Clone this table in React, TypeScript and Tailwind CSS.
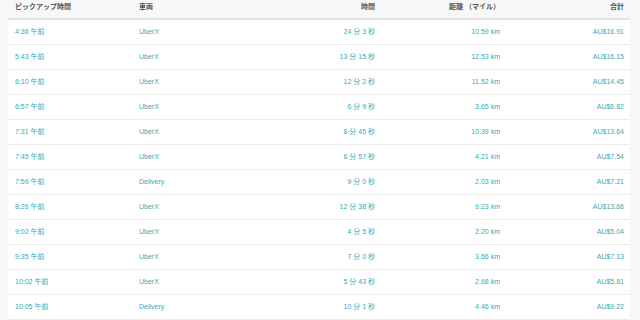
const trips = [
  { time: '4:36 午前', car: 'UberX', dur: '24 分 3 秒', dist: '10.59 km', total: 'AU$16.91' },
  { time: '5:43 午前', car: 'UberX', dur: '13 分 15 秒', dist: '12.53 km', total: 'AU$16.15' },
  { time: '6:10 午前', car: 'UberX', dur: '12 分 2 秒', dist: '11.52 km', total: 'AU$14.45' },
  { time: '6:57 午前', car: 'UberX', dur: '6 分 9 秒', dist: '3.65 km', total: 'AU$6.82' },
  { time: '7:31 午前', car: 'UberX', dur: '8 分 45 秒', dist: '10.39 km', total: 'AU$13.64' },
  { time: '7:45 午前', car: 'UberX', dur: '6 分 57 秒', dist: '4.21 km', total: 'AU$7.54' },
  { time: '7:59 午前', car: 'Delivery', dur: '9 分 0 秒', dist: '2.03 km', total: 'AU$7.21' },
  { time: '8:26 午前', car: 'UberX', dur: '12 分 38 秒', dist: '9.23 km', total: 'AU$13.66' },
  { time: '9:02 午前', car: 'UberX', dur: '4 分 5 秒', dist: '2.20 km', total: 'AU$5.04' },
  { time: '9:35 午前', car: 'UberX', dur: '7 分 0 秒', dist: '3.66 km', total: 'AU$7.13' },
  { time: '10:02 午前', car: 'UberX', dur: '5 分 43 秒', dist: '2.68 km', total: 'AU$5.81' },
  { time: '10:05 午前', car: 'Delivery', dur: '10 分 1 秒', dist: '4.46 km', total: 'AU$9.22' },
]

const cols = 'grid grid-cols-[124px_124px_125px_125px_124px]'

export default function App() {
  return (
    <div
      className="w-[640px] h-[320px] overflow-hidden bg-[#f7f7f7] pl-2 pr-[10px]"
      style={{ fontFamily: '"Liberation Sans", Arial, "Noto Sans CJK JP", sans-serif' }}
    >
      {/* header */}
      <div className={`${cols} h-[20px] border-b-2 border-[#e4e4e4] text-[7px] font-bold text-[#555]`}>
        <div className="pl-[7px] pt-[2px]">ピックアップ時間</div>
        <div className="pl-[7px] pt-[2px]">車両</div>
        <div className="pr-[6px] pt-[2px] text-right">時間</div>
        <div className="pr-[6px] pt-[2px] text-right">距離 （マイル）</div>
        <div className="pr-[6px] pt-[2px] text-right">合計</div>
      </div>

      {/* rows */}
      <div className="bg-white text-[7px] text-[#3aa9b4]">
        {trips.map((t) => (
          <div key={t.time} className={`${cols} h-[25px] items-center border-b border-[#ececec]`}>
            <div className="pl-[7px]">{t.time}</div>
            <div className="pl-[7px]">{t.car}</div>
            <div className="pr-[6px] text-right">{t.dur}</div>
            <div className="pr-[6px] text-right">{t.dist}</div>
            <div className="pr-[6px] text-right">{t.total}</div>
          </div>
        ))}
      </div>
    </div>
  )
}
